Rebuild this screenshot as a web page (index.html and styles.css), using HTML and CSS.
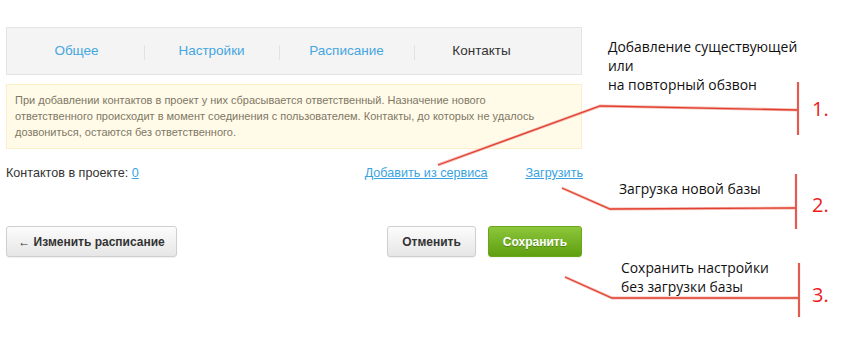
FILE: index.html
```html
<!DOCTYPE html>
<html lang="ru">
<head>
<meta charset="utf-8">
<link rel="stylesheet" href="styles.css">
</head>
<body>
<div class="page">
  <div class="panel">
    <nav class="tabs">
      <a class="tab" href="#">Общее</a>
      <a class="tab" href="#">Настройки</a>
      <a class="tab" href="#">Расписание</a>
      <span class="tab active">Контакты</span>
    </nav>
    <div class="notice">При добавлении контактов в проект у них сбрасывается ответственный. Назначение нового<br>ответственного происходит в момент соединения с пользователем. Контакты, до которых не удалось<br>дозвониться, остаются без ответственного.</div>
    <div class="info-row">
      <div class="count">Контактов в проекте: <a href="#">0</a></div>
      <div class="actions">
        <a href="#">Добавить из сервиса</a>
        <a href="#">Загрузить</a>
      </div>
    </div>
    <div class="buttons">
      <button class="btn">← Изменить расписание</button>
      <div class="right-buttons">
        <button class="btn">Отменить</button>
        <button class="btn btn-green">Сохранить</button>
      </div>
    </div>
  </div>

  <svg class="annot-lines" width="842" height="340" viewBox="0 0 842 340">
    <g class="shadow" stroke="#f3b9b3" stroke-width="3" fill="none">
      <polyline points="438,165 600,106 798,110"/>
      <polyline points="562,188 610,209 796,208"/>
      <polyline points="565,277 612,298 799,298"/>
    </g>
    <g stroke="#e2412f" stroke-width="1.3" fill="none">
      <polyline points="438,165 600,106 798,110"/>
      <polyline points="562,188 610,209 796,208"/>
      <polyline points="565,277 612,298 799,298"/>
    </g>
    <g stroke="#e25b52" stroke-width="2.2">
      <line x1="798" y1="82" x2="798" y2="135"/>
      <line x1="796" y1="174" x2="796" y2="229"/>
      <line x1="799" y1="263" x2="799" y2="317"/>
    </g>
  </svg>
  <div class="note note1">Добавление существующей<br>или<br>на повторный обзвон</div>
  <div class="note note2">Загрузка новой базы</div>
  <div class="note note3">Сохранить настройки<br>без загрузки базы</div>
  <div class="num num1">1.</div>
  <div class="num num2">2.</div>
  <div class="num num3">3.</div>
</div>
</body>
</html>
```

FILE: styles.css
```css
* { box-sizing: border-box; }
html, body { margin: 0; padding: 0; background: #fff; }
body { font-family: "Liberation Sans", Arial, sans-serif; color: #333; }
.page { position: relative; width: 842px; height: 340px; overflow: hidden; }
.panel { width: 576px; margin-left: 6px; padding-top: 27px; }

.tabs {
  display: flex;
  align-items: center;
  height: 48px;
  padding-left: 2px;
  background: #f4f4f4;
  border: 1px solid #e4e4e4;
}
.tab {
  width: 135px;
  text-align: center;
  font-size: 13.5px;
  line-height: 16px;
  color: #45a6e0;
  text-decoration: none;
  position: relative;
}
.tab + .tab::before {
  content: "";
  position: absolute;
  left: 0;
  top: 2px;
  height: 15px;
  border-left: 1px solid #e2e2e2;
}
.tab.active { color: #333; }

.notice {
  margin-top: 9px;
  background: #fffbe8;
  border: 1px solid #fbeec8;
  padding: 7px 8px 8px 8px;
  font-size: 11px;
  line-height: 16px;
  color: #807765;
  height: 65px;
}

.info-row {
  display: flex;
  justify-content: space-between;
  margin-top: 16px;
  font-size: 12.6px;
  line-height: 16px;
}
.count { color: #333; }
.count a, .actions a { color: #3aa3df; text-decoration: underline; }
.actions { display: flex; gap: 38px; margin-right: -1px; }

.buttons {
  display: flex;
  justify-content: space-between;
  margin-top: 45px;
}
.right-buttons { display: flex; gap: 12px; }
.btn {
  height: 31px;
  padding: 0;
  font-family: "Liberation Sans", Arial, sans-serif;
  font-size: 12px;
  font-weight: bold;
  white-space: nowrap;
  color: #333;
  background: linear-gradient(#fcfcfc, #e6e6e6);
  border: 1px solid #cfcfcf;
  border-radius: 3px;
  box-shadow: 0 1px 1px rgba(0,0,0,0.06);
}
.buttons > .btn { width: 171px; }
.right-buttons .btn { width: 89px; }
.right-buttons .btn-green { width: 94px; }
.btn-green {
  color: #fff;
  background: linear-gradient(#8dc63a, #5e9f10);
  border-color: #6aa61c;
  text-shadow: 0 1px 0 rgba(0,0,0,0.25);
}

.annot-lines { position: absolute; left: 0; top: 0; pointer-events: none; }
.note {
  position: absolute;
  font-family: "Open Sans", "DejaVu Sans", sans-serif;
  font-size: 13.9px;
  color: #111;
  line-height: 19px;
}
.note1 { left: 608px; top: 37px; }
.note2 { left: 619px; top: 179px; }
.note3 { left: 621px; top: 258px; }
.num {
  position: absolute;
  font-family: "Open Sans", "DejaVu Sans", sans-serif;
  font-size: 20px;
  color: #ee1c1c;
  line-height: 24px;
}
.num1 { left: 812px; top: 97px; }
.num2 { left: 812px; top: 193px; }
.num3 { left: 812px; top: 283px; }
```
